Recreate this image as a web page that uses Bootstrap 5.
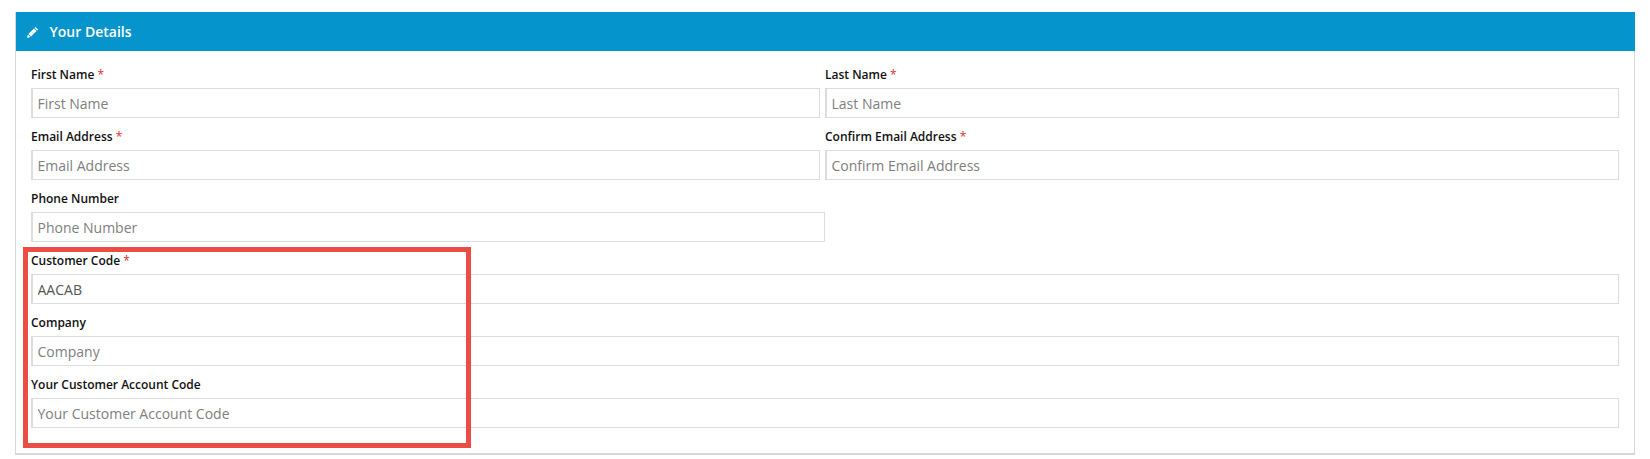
<!DOCTYPE html>
<html lang="en">
<head>
<meta charset="utf-8">
<title>Your Details</title>
<link rel="stylesheet" href="https://cdn.jsdelivr.net/npm/bootstrap@5.3.0/dist/css/bootstrap.min.css">
<style>
html, body { background: #fff; }
body { font-family: "Open Sans", sans-serif; padding: 12px 15px 0; overflow: hidden; }
.details-panel { width: 1620px; height: 443px; border: 1px solid #d8d8d8; border-top: 0; border-bottom-width: 2px; border-radius: 0; position: relative; }
.card .details-head { height: 39px; margin: 0 -1px 0 0; background: #0594cb; color: #fff; font-size: 14px; font-weight: 600; padding: 0 0 0 11px; gap: 10.5px; border: 0; border-radius: 0; }
.details-body { padding: 12px 15px 0; }
.field-row { height: 62px; }
.field-half { width: 794px; flex: none; }
.field-inset { padding-right: 5px; }
.field-label { display: block; font-size: 12px; font-weight: 600; line-height: 16px; height: 25px; margin: 0; padding-top: 4px; color: #111; }
.req { color: #e02b2b; font-weight: 500; }
.field-input { height: 30px; border: 1px solid #ddd; border-width: 1px 1px 1px 2px; border-radius: 0; padding: 0 4.5px; font-size: 14px; color: #555; box-shadow: none; }
.field-input::placeholder { color: #808080; opacity: 1; }
.callout-box { position: absolute; left: 7px; top: 235px; width: 448px; height: 201px; border: 5px solid #ec4c46; pointer-events: none; }
</style>
</head>
<body>
<div class="card details-panel">
  <div class="card-header d-flex align-items-center details-head">
    <svg width="12" height="12" viewBox="0 0 12 12" aria-hidden="true"><path fill="#fff" d="M8.6.9 11.2 3.4 10.2 4.4 7.6 1.9ZM7 2.5 9.6 5 4 10.6 1.4 8ZM.9 8.6 3.4 11.1 0 12Z"/></svg>
    <span>Your Details</span>
  </div>
  <div class="details-body">
    <div class="d-flex field-row">
      <div class="field-half field-inset"><label class="field-label">First Name <span class="req">*</span></label><input class="form-control field-input" placeholder="First Name"></div>
      <div class="field-half"><label class="field-label">Last Name <span class="req">*</span></label><input class="form-control field-input" placeholder="Last Name"></div>
    </div>
    <div class="d-flex field-row">
      <div class="field-half field-inset"><label class="field-label">Email Address <span class="req">*</span></label><input class="form-control field-input" placeholder="Email Address"></div>
      <div class="field-half"><label class="field-label">Confirm Email Address <span class="req">*</span></label><input class="form-control field-input" placeholder="Confirm Email Address"></div>
    </div>
    <div class="d-flex field-row">
      <div class="field-half"><label class="field-label">Phone Number</label><input class="form-control field-input" placeholder="Phone Number"></div>
    </div>
    <div class="field-row"><label class="field-label">Customer Code <span class="req">*</span></label><input class="form-control field-input" value="AACAB"></div>
    <div class="field-row"><label class="field-label">Company</label><input class="form-control field-input" placeholder="Company"></div>
    <div class="field-row"><label class="field-label">Your Customer Account Code</label><input class="form-control field-input" placeholder="Your Customer Account Code"></div>
  </div>
  <div class="callout-box"></div>
</div>
<script src="https://cdn.jsdelivr.net/npm/bootstrap@5.3.0/dist/js/bootstrap.bundle.min.js"></script>
</body>
</html>
